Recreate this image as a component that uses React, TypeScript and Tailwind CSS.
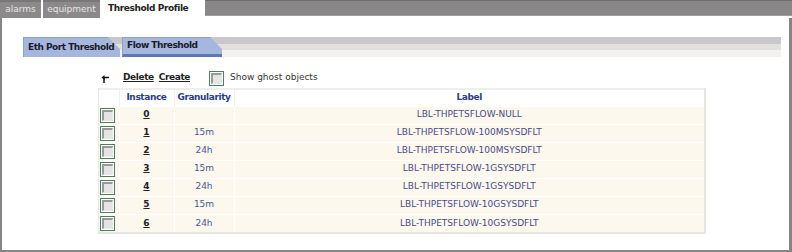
const ROWS = [
  { id: "0", gran: "", label: "LBL-THPETSFLOW-NULL" },
  { id: "1", gran: "15m", label: "LBL-THPETSFLOW-100MSYSDFLT" },
  { id: "2", gran: "24h", label: "LBL-THPETSFLOW-100MSYSDFLT" },
  { id: "3", gran: "15m", label: "LBL-THPETSFLOW-1GSYSDFLT" },
  { id: "4", gran: "24h", label: "LBL-THPETSFLOW-1GSYSDFLT" },
  { id: "5", gran: "15m", label: "LBL-THPETSFLOW-10GSYSDFLT" },
  { id: "6", gran: "24h", label: "LBL-THPETSFLOW-10GSYSDFLT" },
];

function Box() {
  return (
    <span className="block w-[15px] h-[15px] border border-[#4d7d5f] bg-white p-[1px]">
      <span className="block w-full h-full border-t-2 border-l-2 border-t-[#9a9a9a] border-l-[#9a9a9a] border-b border-r border-b-[#e8e8e8] border-r-[#e8e8e8] bg-[#e4e4e4]" />
    </span>
  );
}

function SubTab({ label, width, active }: { label: string; width: string; active?: boolean }) {
  return (
    <div
      className={`h-[20px] mr-[2px] pl-[4px] flex items-center whitespace-nowrap font-bold tracking-[-0.5px] text-[9px] text-[#1a1a2a] bg-[#a6b7de] border-t border-l border-[#8fa0c8] ${width} ${active ? "border-b-[3px] border-b-[#5b79b3]" : ""}`}
      style={{ clipPath: "polygon(0 0, calc(100% - 12px) 0, 100% 12px, 100% 100%, 0 100%)" }}
    >
      {label}
    </div>
  );
}

export default function App() {
  return (
    <div className="w-[792px] h-[252px] bg-white text-[9px] font-['DejaVu_Sans',Verdana,sans-serif] flex flex-col">
      {/* top tabs */}
      <div className="flex h-[18px] bg-white whitespace-nowrap">
        <div className="w-[41px] flex items-center justify-center bg-[#8c898b] text-[#e6e6e6] border-t-2 border-[#7a7779] mr-[2px]">alarms</div>
        <div className="w-[57px] flex items-center justify-center bg-[#8c898b] text-[#e6e6e6] border-t-2 border-[#7a7779] mr-[2px]">equipment</div>
        <div className="w-[103px] flex items-center pl-[6px] bg-white text-[#222] font-bold tracking-[-0.4px]">Threshold Profile</div>
        <div className="flex-1 flex flex-col">
          <div className="h-[16px] bg-[#8a8789] border-t border-[#706d6f] border-b border-b-[#a09da0]" />
          <div className="flex-1 bg-white" />
        </div>
      </div>

      <div className="flex-1 border-l-2 border-r-[3px] border-b-2 border-[#858585] flex flex-col">
        {/* sub tabs */}
        <div className="mt-[19px] ml-[21px] mr-[8px] h-[20px] flex bg-[linear-gradient(#c8c8cc_0,#c8c8cc_7px,#e3e1de_7px,#e3e1de_13px,#f3f2f0_13px)]">
          <SubTab label="Eth Port Threshold" width="w-[97px]" />
          <SubTab label="Flow Threshold" width="w-[100px]" active />
        </div>

        {/* actions */}
        <div className="mt-[13px] ml-[99px] flex items-center h-[16px]">
          <svg width="9" height="9" viewBox="0 0 9 9" className="mt-[3px]">
            <path d="M8 2.5 H3 V8" stroke="#111" strokeWidth="1.5" fill="none" />
            <path d="M0.5 2.5 L3.5 0 V5 Z" fill="#111" />
          </svg>
          <span className="ml-[13px] font-bold underline tracking-[-0.4px] text-[#222]">Delete</span>
          <span className="ml-[5px] font-bold underline tracking-[-0.4px] text-[#222]">Create</span>
          <span className="ml-[19px]"><Box /></span>
          <span className="ml-[6px] text-[#333]">Show ghost objects</span>
        </div>

        {/* table */}
        <div className="mt-[2px] ml-[96px] w-[608px] border-l border-r-2 border-b-2 border-[#e8e6e2]">
          <table className="w-full border-collapse text-[9px]">
            <thead>
              <tr className="h-[17px] border-t-2 border-[#eeeeee] bg-white">
                <th className="w-[20px] border-r border-[#f0f0f0]" />
                <th className="w-[55px] border-r border-[#f0f0f0] font-bold tracking-[-0.4px] text-[#2b3d80]">Instance</th>
                <th className="w-[60px] border-r border-[#f0f0f0] font-bold tracking-[-0.4px] text-[#2b3d80]">Granularity</th>
                <th className="font-bold tracking-[-0.4px] text-[#2b3d80]">Label</th>
              </tr>
            </thead>
            <tbody>
              {ROWS.map((r) => (
                <tr key={r.id} className="h-[18px] bg-[#fcf8ee] border-t border-white">
                  <td className="pl-[1px] border-r border-white">
                    <Box />
                  </td>
                  <td className="text-center font-bold underline text-[#222] border-r border-white">{r.id}</td>
                  <td className="text-center text-[#4a5795] border-r border-white">{r.gran}</td>
                  <td className="text-center text-[#4a4a88]">{r.label}</td>
                </tr>
              ))}
            </tbody>
          </table>
        </div>
      </div>
    </div>
  );
}
